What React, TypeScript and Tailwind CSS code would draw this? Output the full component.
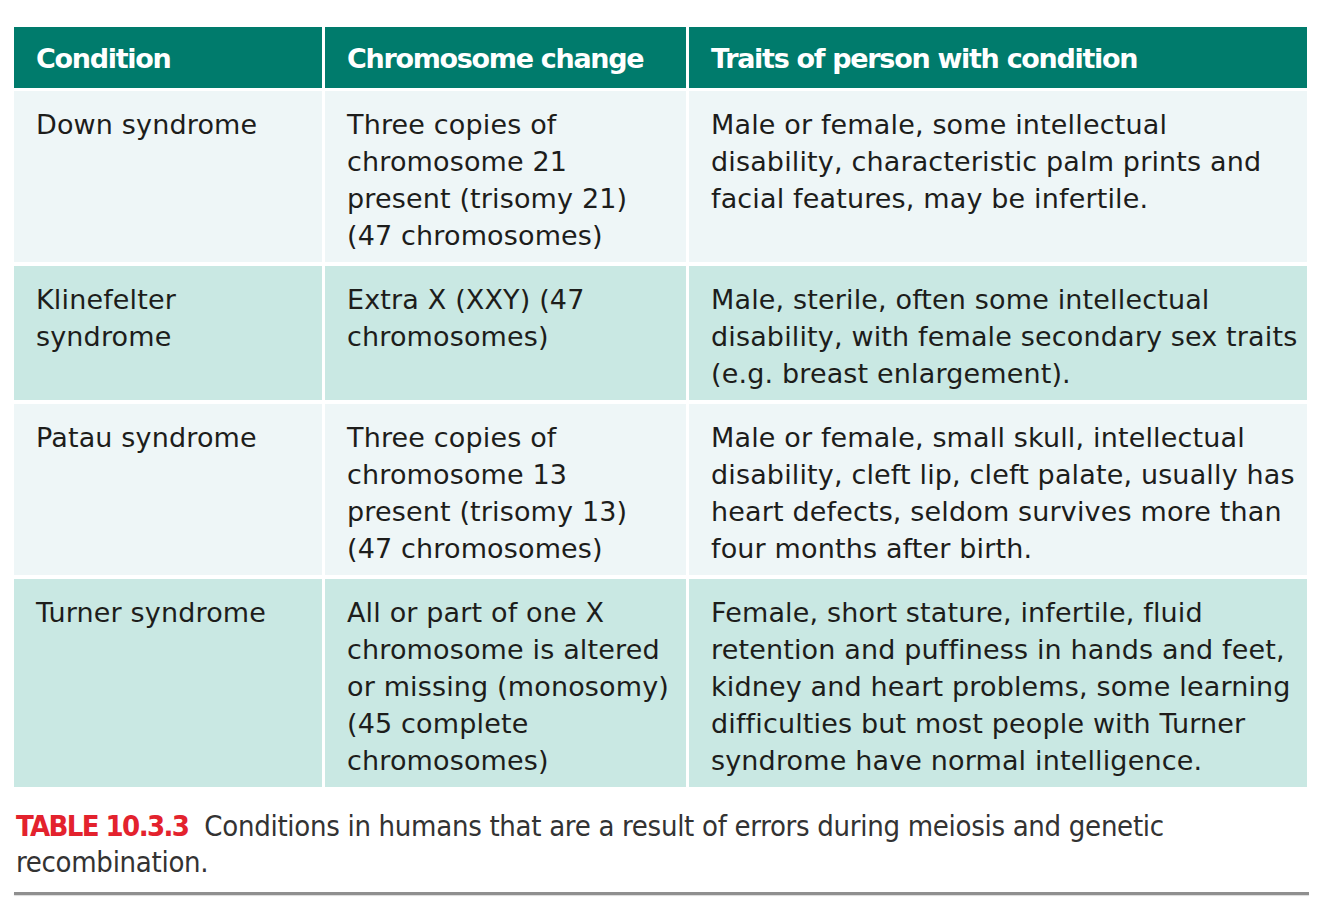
const rows = [
  {
    condition: ['Down syndrome'],
    change: ['Three copies of', 'chromosome 21', 'present (trisomy 21)', '(47 chromosomes)'],
    traits: ['Male or female, some intellectual', 'disability, characteristic palm prints and', 'facial features, may be infertile.'],
    tone: 'light',
  },
  {
    condition: ['Klinefelter', 'syndrome'],
    change: ['Extra X (XXY) (47', 'chromosomes)'],
    traits: ['Male, sterile, often some intellectual', 'disability, with female secondary sex traits', '(e.g. breast enlargement).'],
    tone: 'teal',
  },
  {
    condition: ['Patau syndrome'],
    change: ['Three copies of', 'chromosome 13', 'present (trisomy 13)', '(47 chromosomes)'],
    traits: ['Male or female, small skull, intellectual', 'disability, cleft lip, cleft palate, usually has', 'heart defects, seldom survives more than', 'four months after birth.'],
    tone: 'light',
  },
  {
    condition: ['Turner syndrome'],
    change: ['All or part of one X', 'chromosome is altered', 'or missing (monosomy)', '(45 complete', 'chromosomes)'],
    traits: ['Female, short stature, infertile, fluid', 'retention and puffiness in hands and feet,', 'kidney and heart problems, some learning', 'difficulties but most people with Turner', 'syndrome have normal intelligence.'],
    tone: 'teal',
  },
]

function Lines({ lines }: { lines: string[] }) {
  return (
    <>
      {lines.map((l, i) => (
        <div key={i} className="whitespace-nowrap">{l}</div>
      ))}
    </>
  )
}

export default function App() {
  return (
    <div className="w-[1334px] h-[913px] bg-white pt-[27px] pl-[14px]" style={{ fontFamily: '"DejaVu Sans", sans-serif' }}>
      <div className="w-[1293px] grid grid-cols-[308px_361px_1fr] gap-x-[3px] gap-y-[4px]">
        {/* Cabecera */}
        {['Condition', 'Chromosome change', 'Traits of person with condition'].map((h) => (
          <div key={h} className="h-[61px] mb-[-1px] bg-[#007b6c] text-white font-bold text-[27px] flex items-center pl-[22px] pt-[4px] tracking-[-1.3px]">
            {h}
          </div>
        ))}

        {/* Filas */}
        {rows.map((r, i) => {
          const bg = r.tone === 'teal' ? 'bg-[#c9e8e3]' : 'bg-[#eef6f7]'
          const cell = `${bg} pl-[22px] pt-[15px] pb-[8px] text-[27px] leading-[37px] tracking-[0.15px] text-[#1d1d1b]`
          return [
            <div key={`a${i}`} className={cell}>
              <Lines lines={r.condition} />
            </div>,
            <div key={`b${i}`} className={cell}>
              <Lines lines={r.change} />
            </div>,
            <div key={`c${i}`} className={cell}>
              <Lines lines={r.traits} />
            </div>,
          ]
        })}
      </div>

      {/* Leyenda */}
      <div
        className="w-[1293px] mt-[21px] pl-[2px] text-[29px] leading-[36px] tracking-[-0.3px] text-[#333333]"
        style={{ fontFamily: '"Liberation Sans Narrow", "DejaVu Sans Condensed", sans-serif' }}
      >
        <span className="font-bold text-[#e3222d] tracking-[-1.6px]">TABLE 10.3.3</span>
        <span>&nbsp; Conditions in humans that are a result of errors during meiosis and genetic</span>
        <div>recombination.</div>
      </div>
      <div className="w-[1295px] h-[3px] mt-[12px] bg-[#8f8f8f] shadow-[0_1px_1px_rgba(0,0,0,0.15)]" />
    </div>
  )
}
